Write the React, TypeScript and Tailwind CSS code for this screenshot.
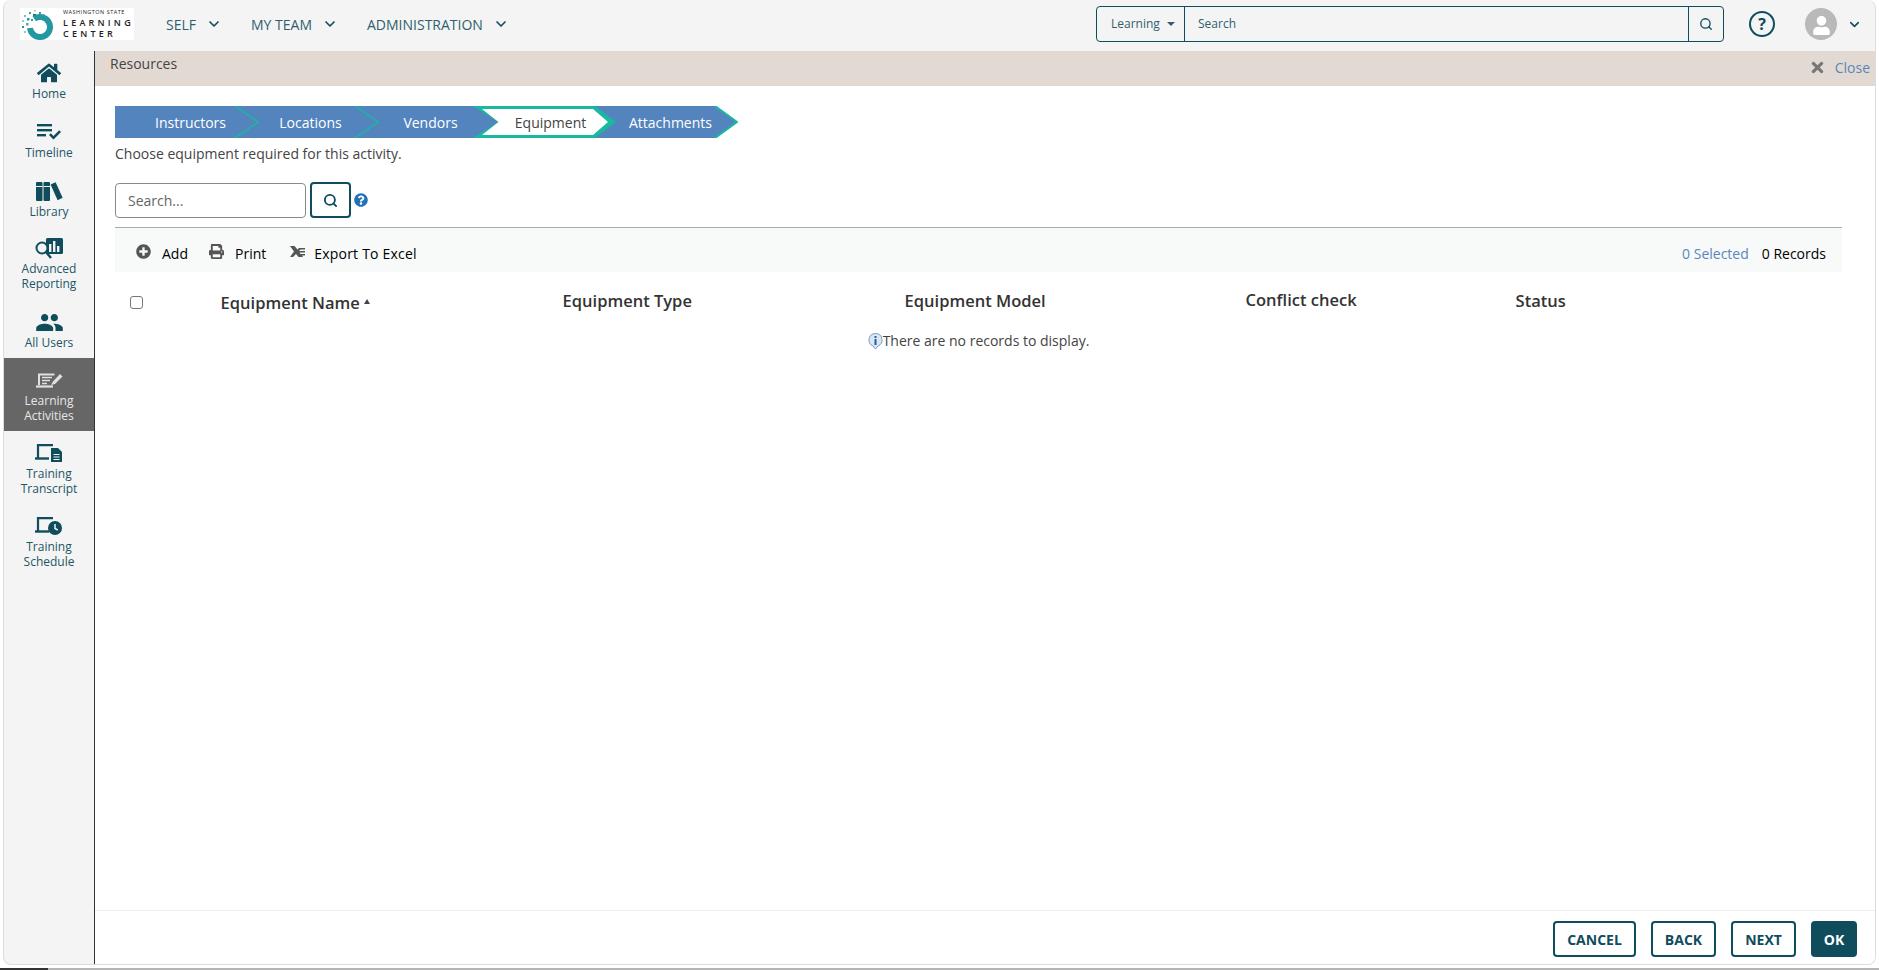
import { ChevronDown, Search } from 'lucide-react'
import { FaHome, FaPlusCircle, FaPrint, FaQuestionCircle, FaTimes, FaUser } from 'react-icons/fa'
import { MdPeople } from 'react-icons/md'

const TEAL = '#0f4c5c'

function LogoMark() {
  const dots: [number, number, number, string][] = [
    [4, 7, 2, '#7fb6bd'], [9, 4, 2, '#3d9aa3'], [14, 2, 1.500, '#9cc7cc'], [13, 6, 3, '#1f6f7c'], [19, 4, 2, '#3d9aa3'],
    [23, 6, 1.500, '#7fb6bd'], [2, 12, 2, '#9cc7cc'], [7, 10, 2.500, '#2a96a0'], [2, 18, 2, '#2a96a0'], [6, 15, 2.500, '#5aa9b1'],
    [4, 23, 2, '#9cc7cc'], [8, 21, 2, '#2a96a0'], [11, 26, 2, '#7fb6bd'], [16, 9, 2, '#7fb6bd'], [11, 11, 2, '#3d9aa3'],
  ]
  return (
    <svg width="40" height="32" viewBox="0 0 40 32" className="shrink-0">
      {dots.map(([x, y, s, c], i) => (
        <rect key={i} x={x} y={y} width={s} height={s} fill={c} />
      ))}
      <circle
        cx="20"
        cy="19"
        r="10"
        fill="none"
        stroke="#2398a3"
        strokeWidth="6"
        strokeDasharray="52 10.800"
        transform="rotate(-125 20 19)"
      />
    </svg>
  )
}

function TimelineIcon() {
  return (
    <svg width="24" height="16" viewBox="0 0 24 16" fill="currentColor">
      <rect x="0" y="0" width="15" height="2.400" />
      <rect x="0" y="5" width="15" height="2.400" />
      <rect x="0" y="10" width="9" height="2.400" />
      <path d="M12 11l1.800-1.800 2.700 2.700 5.700-5.700L24 8l-7.500 7.500z" />
    </svg>
  )
}

function LibraryIcon() {
  return (
    <svg width="27" height="19" viewBox="0 0 27 19" fill="currentColor">
      <rect x="0" y="0" width="6.500" height="19" rx="1" />
      <rect x="7.500" y="0" width="6.500" height="19" rx="1" />
      <rect x="0" y="4" width="6.500" height="1" fill="#f4f4f4" />
      <rect x="7.500" y="4" width="6.500" height="1" fill="#f4f4f4" />
      <path d="M14.600 2.600l5-2.400 7 15.600-5 2.400z" />
    </svg>
  )
}

function ReportingIcon() {
  return (
    <svg width="28" height="21" viewBox="0 0 28 21">
      <rect x="11" y="0" width="17" height="16" rx="1.500" fill="currentColor" />
      <rect x="14" y="6" width="2.400" height="8" fill="#f4f4f4" />
      <rect x="18" y="3" width="2.400" height="11" fill="#f4f4f4" />
      <rect x="22" y="8" width="2.400" height="6" fill="#f4f4f4" />
      <circle cx="7" cy="10" r="5.500" fill="#f4f4f4" stroke="currentColor" strokeWidth="2" />
      <path d="M11 14l5 6" stroke="currentColor" strokeWidth="2.400" />
    </svg>
  )
}

function ActivitiesIcon() {
  return (
    <svg width="27" height="15" viewBox="0 0 27 15" fill="none" stroke="currentColor">
      <path d="M3 12V1.500h15.500" strokeWidth="2" />
      <path d="M0 13.500h17" strokeWidth="2.200" />
      <path d="M6 4.500h10M6 7.500h8M6 10.500h5" strokeWidth="1.600" />
      <path d="M15 12l2-3.500L24 1l2.500 2.500L19 11z" fill="currentColor" stroke="none" />
    </svg>
  )
}

function LaptopBase({ children }: { children: React.ReactNode }) {
  return (
    <svg width="28" height="18" viewBox="0 0 28 18" fill="none">
      <path d="M3 14V1.200h15" stroke="currentColor" strokeWidth="2.200" />
      <path d="M0 14.500h14" stroke="currentColor" strokeWidth="2.400" />
      {children}
    </svg>
  )
}

function TranscriptIcon() {
  return (
    <LaptopBase>
      <path d="M16 4h7l4 4v10H16z" fill="currentColor" />
      <path d="M18.500 10.500h6M18.500 13h6M18.500 15.500h6" stroke="#f4f4f4" strokeWidth="1.100" />
    </LaptopBase>
  )
}

function ScheduleIcon() {
  return (
    <LaptopBase>
      <circle cx="20" cy="11" r="7" fill="currentColor" />
      <path d="M20 7v4.500l2.800 1.500" stroke="#f4f4f4" strokeWidth="1.500" />
    </LaptopBase>
  )
}

function ExcelIcon() {
  return (
    <svg width="15" height="11" viewBox="0 0 15 11" fill="#555">
      <path d="M0 0h4.500L7.500 3.500 9 2h6v1.500h-4.500L9 5h6v1.500H9.500L10.500 8H15v1.500h-3L13 11H8.500L6 8 3 11H0l4-5.500z" />
    </svg>
  )
}

function InfoIcon() {
  return (
    <svg width="15" height="16" viewBox="0 0 15 16" className="shrink-0">
      <path d="M7.500 0.500a6.500 6.500 0 0 1 2.500 12.500L7.500 16 5 13A6.500 6.500 0 0 1 7.500 0.500z" fill="#dbe7f3" stroke="#7a9cc0" />
      <rect x="6.500" y="3" width="2" height="2" fill="#1f5fa8" />
      <rect x="6.500" y="6" width="2" height="6" fill="#1f5fa8" />
    </svg>
  )
}

const navItems = ['SELF', 'MY TEAM', 'ADMINISTRATION']

const sideItems = [
  { label: ['Home'], icon: <FaHome size={24} />, box: 'h-[59px] pt-[12px]' },
  { label: ['Timeline'], icon: <TimelineIcon />, box: 'h-[59px] pt-[12px]' },
  { label: ['Library'], icon: <LibraryIcon />, box: 'h-[59px] pt-[12px]' },
  { label: ['Advanced', 'Reporting'], icon: <ReportingIcon />, box: 'h-[72px] pt-[10px]' },
  { label: ['All Users'], icon: <MdPeople size={29} />, box: 'h-[58px] pt-[12px]' },
  { label: ['Learning', 'Activities'], icon: <ActivitiesIcon />, box: 'h-[73px] pt-[12px]', active: true },
  { label: ['Training', 'Transcript'], icon: <TranscriptIcon />, box: 'h-[73px] pt-[12px]' },
  { label: ['Training', 'Schedule'], icon: <ScheduleIcon />, box: 'h-[73px] pt-[12px]' },
]

const steps = [
  { name: 'Instructors' },
  { name: 'Locations' },
  { name: 'Vendors' },
  { name: 'Equipment', current: true },
  { name: 'Attachments' },
]

function Stepper() {
  return (
    <div className="relative flex h-[32px] w-[623px]">
      <svg width="623" height="32" viewBox="0 0 623 32" className="absolute inset-0">
        <polygon points="0,0 600,0 622.500,16 600,32 0,32" fill="#5484be" />
        <polyline points="120,0 143,16 120,32" fill="none" stroke="#18b9a0" strokeWidth="1.500" />
        <polyline points="240,0 263,16 240,32" fill="none" stroke="#18b9a0" strokeWidth="1.500" />
        <polygon points="358,0 480,0 501,16 480,32 358,32 383,16" fill="#18b9a0" />
        <polygon points="367,3 478,3 493,16 478,29 367,29 383.500,16" fill="#fff" />
        <polyline points="600,0 622,16 600,32" fill="none" stroke="#18b9a0" strokeWidth="2" />
      </svg>
      {steps.map((s) => (
        <div
          key={s.name}
          className={`relative flex w-[120px] items-center justify-center pl-[31px] text-[14px] ${
            s.current ? 'text-[#444]' : 'text-white'
          }`}
        >
          {s.name}
        </div>
      ))}
    </div>
  )
}

export default function App() {
  return (
    <div className="flex h-[970px] w-[1879px] flex-col overflow-hidden bg-white font-['Open_Sans','Liberation_Sans',sans-serif]">
      <div className="ml-[3px] flex h-[965px] w-[1873px] shrink-0 flex-col overflow-hidden rounded-[8px] border-x border-b border-[#dcdcdc] bg-[#f4f4f4]">
        {/* 頁首 */}
        <header className="flex h-[51px] shrink-0 items-center pb-[3px] pl-[16px]">
          <div className="flex h-[32px] w-[114px] shrink-0 bg-white">
            <LogoMark />
            <div className="ml-[3px] flex flex-col pt-[1px] text-[#222]">
              <span className="text-[5.500px] leading-[7px] tracking-[0.09em] whitespace-nowrap">WASHINGTON STATE</span>
              <span className="mt-[1px] text-[9px] leading-[11px] font-semibold tracking-[0.36em]">LEARNING</span>
              <span className="text-[9px] leading-[11px] font-semibold tracking-[0.36em]">CENTER</span>
            </div>
          </div>
          <nav className="ml-[32px] flex items-center gap-[29px] text-[14px] text-[#2f5f6e]">
            {navItems.map((item) => (
              <div key={item} className="flex items-center gap-[10px]">
                <span>{item}</span>
                <ChevronDown size={16} strokeWidth={2.5} color={TEAL} />
              </div>
            ))}
          </nav>
          <div className="ml-auto flex h-[36px] w-[628px] items-center rounded-[4px] border border-[#0f4c5c] text-[12px] text-[#2f5f6e]">
            <div className="flex h-full w-[88px] items-center gap-[7px] border-r border-[#0f4c5c] pl-[14px]">
              Learning
              <span className="h-0 w-0 border-x-[4px] border-t-[4px] border-x-transparent border-t-[#2f5f6e]" />
            </div>
            <span className="flex-1 pl-[13px]">Search</span>
            <div className="flex h-full w-[35px] items-center justify-center border-l border-[#0f4c5c]">
              <Search size={14} strokeWidth={2.25} color={TEAL} />
            </div>
          </div>
          <div className="ml-[25px] flex h-[26px] w-[26px] items-center justify-center rounded-full border-[2.500px] border-[#0f4c5c] text-[16px] leading-none font-bold text-[#0f4c5c]">
            ?
          </div>
          <div className="ml-[30px] flex h-[32px] w-[32px] items-end justify-center overflow-hidden rounded-full bg-[#b9b9b9] pb-[5px]">
            <FaUser size={19} color="#fff" />
          </div>
          <ChevronDown size={15} strokeWidth={2.5} color={TEAL} className="mr-[13px] ml-[10px]" />
        </header>

        <div className="flex min-h-0 flex-1">
          {/* 側邊欄 */}
          <aside className="w-[90px] shrink-0 text-[12px] leading-[15px] text-[#1d5666]">
            {sideItems.map((item) => (
              <div
                key={item.label.join(' ')}
                className={`flex flex-col items-center ${item.box} ${item.active ? 'bg-[#666666] text-[#e8e8e8]' : ''}`}
              >
                <div className={`flex h-[20px] items-center justify-center ${item.active ? 'text-[#e0e0e0]' : 'text-[#0f4c5c]'}`}>
                  {item.icon}
                </div>
                <div className="mt-[3px] text-center">
                  {item.label.map((l) => (
                    <div key={l}>{l}</div>
                  ))}
                </div>
              </div>
            ))}
          </aside>

          <main className="flex min-w-0 flex-1 flex-col border-l border-[#333] bg-white">
            <div className="flex h-[35px] shrink-0 bg-[#e2dad2] pr-[5px] pl-[15px] text-[14px]">
              <span className="pt-[3px] leading-[19px] text-[#444]">Resources</span>
              <div className="ml-auto flex items-center gap-[9px] pb-[3px] text-[#5a86bd]">
                <FaTimes size={17} color="#777" />
                Close
              </div>
            </div>

            <div className="flex-1 pt-[20px] pr-[33px] pl-[20px] text-[14px] text-[#444]">
              <Stepper />
              <p className="mt-[6px] leading-[20px]">Choose equipment required for this activity.</p>

              <div className="mt-[18px] flex items-center">
                <div className="flex h-[35px] w-[191px] items-center rounded-[4px] border border-[#8a8a8a] pl-[12px] text-[#666]">
                  Search...
                </div>
                <div className="ml-[4px] flex h-[36px] w-[41px] items-center justify-center rounded-[4px] border-2 border-[#0f4c5c]">
                  <Search size={15} strokeWidth={3} color={TEAL} />
                </div>
                <FaQuestionCircle size={14} color="#1f72b8" className="ml-[3px]" />
              </div>

              <div className="mt-[9px] flex h-[45px] items-center border-t border-[#aaaaaa] bg-[#f8f9f9] pt-[7px] pr-[16px] pl-[21px] font-medium text-black">
                <div className="flex items-center gap-[11px]">
                  <FaPlusCircle size={15} color="#555" className="mt-[-4px]" />
                  Add
                </div>
                <div className="ml-[21px] flex items-center gap-[11px]">
                  <FaPrint size={15} color="#555" className="mt-[-4px]" />
                  Print
                </div>
                <div className="ml-[24px] flex items-center gap-[9px]">
                  <span className="mt-[-4px]">
                    <ExcelIcon />
                  </span>
                  <span className="tracking-[0.015em]">Export To Excel</span>
                </div>
                <span className="ml-auto font-normal text-[#5a86bd]">0 Selected</span>
                <span className="ml-[13px] font-normal">0 Records</span>
              </div>

              <div className="grid grid-cols-[90.600px_342px_342px_341px_270px_1fr] pt-[17px] pl-[15px] text-[16.500px] leading-[22px] font-semibold text-[#333]">
                <input
                  type="checkbox"
                  readOnly
                  className="mt-[7px] h-[13px] w-[13px] appearance-none rounded-[3px] border border-[#767676] bg-white"
                />
                <div className="mt-[3px] flex items-start gap-[4px]">
                  Equipment Name
                  <span className="mt-[7px] h-0 w-0 border-x-[3.500px] border-b-[5px] border-x-transparent border-b-[#444]" />
                </div>
                <div className="mt-[1px]">Equipment Type</div>
                <div className="mt-[1px]">Equipment Model</div>
                <div>Conflict check</div>
                <div className="mt-[1px]">Status</div>
              </div>

              <div className="mt-[17px] flex items-center justify-center leading-[20px] text-[#444]">
                <InfoIcon />
                There are no records to display.
              </div>
            </div>

            <footer className="flex h-[54px] shrink-0 items-start justify-end gap-[15px] border-t border-[#eeeeee] pt-[10px] pr-[18px] text-[14px] font-bold">
              {['CANCEL', 'BACK', 'NEXT'].map((b) => (
                <button
                  key={b}
                  className={`h-[36px] rounded-[4px] border-2 border-[#0f4c5c] text-[#0f4c5c] ${b === 'CANCEL' ? 'w-[83px]' : 'w-[65px]'}`}
                >
                  {b}
                </button>
              ))}
              <button className="h-[36px] w-[46px] rounded-[4px] bg-[#0f4c5c] text-white">OK</button>
            </footer>
          </main>
        </div>
      </div>
      <div className="mt-[3px] flex h-[2px] shrink-0">
        <div className="w-[48px] bg-[#333]" />
        <div className="flex-1 bg-[#b5b5b5]" />
      </div>
    </div>
  )
}
